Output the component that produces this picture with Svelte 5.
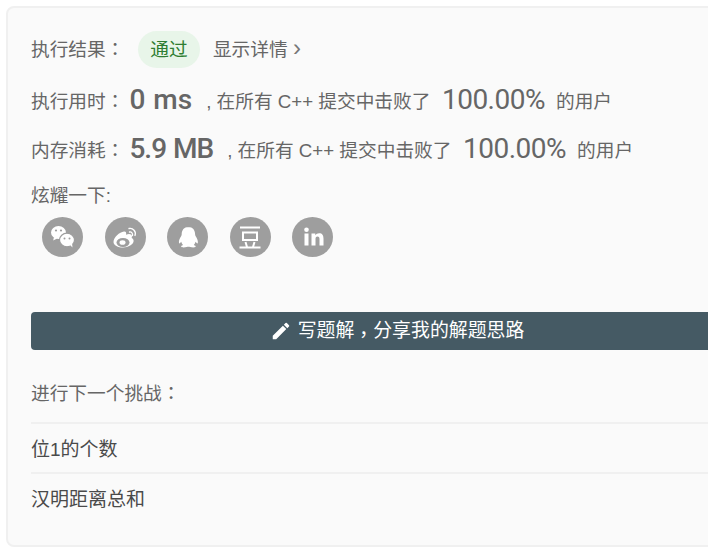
<script>
	const shares = ['wechat', 'weibo', 'qq', 'douban', 'linkedin'];
	const next = ['位1的个数', '汉明距离总和'];
</script>

<div class="page">
	<div class="card">
		<div class="row result">
			<span class="label">执行结果<span class="punct">：</span></span>
			<span class="badge">通过</span>
			<span class="details">显示详情 <span class="chev">›</span></span>
		</div>
		<div class="row stat">
			<span class="label">执行用时<span class="punct">：</span></span>
			<span class="num big">0 ms</span>
			<span class="text">, 在所有 C++ 提交中击败了</span>
			<span class="num pct">100.00%</span>
			<span class="text">的用户</span>
		</div>
		<div class="row stat second">
			<span class="label">内存消耗<span class="punct">：</span></span>
			<span class="num big">5.9 MB</span>
			<span class="text">, 在所有 C++ 提交中击败了</span>
			<span class="num pct">100.00%</span>
			<span class="text">的用户</span>
		</div>
		<div class="brag">炫耀一下:</div>
		<div class="shares">
			{#each shares as name}
				<span class="share" title={name}>
					{#if name === 'wechat'}
						<svg viewBox="0 0 40 40" width="40" height="40">
							<ellipse cx="15.500" cy="15.500" rx="7.500" ry="6.500" fill="#fff" />
							<path d="M11 20l-.8 3.500 4-2z" fill="#fff" />
							<ellipse cx="24" cy="23" rx="7.500" ry="6.800" stroke="#9e9e9e" stroke-width="1.200" fill="#fff" />
							<path d="M27 28l2.500 2.500-.4-4z" fill="#fff" />
							<circle cx="13" cy="13.500" r="1.100" fill="#9e9e9e" />
							<circle cx="18" cy="13.500" r="1.100" fill="#9e9e9e" />
							<circle cx="21.500" cy="21.500" r="1" fill="#9e9e9e" />
							<circle cx="26.500" cy="21.500" r="1" fill="#9e9e9e" />
						</svg>
					{:else if name === 'weibo'}
						<svg viewBox="0 0 40 40" width="40" height="40">
							<path d="M8.500 25c0-4.500 6-10 10.500-10.500 2.200-.2 2.500 1.700 2 3.300 3-1.200 6-.9 6 1.700 0 .7-.2 1.100-.4 1.500 1.500.5 2 1.700 2 3 0 3.500-5.500 6.500-10.500 6.500-5 0-9.600-2-9.600-5.500z" fill="#fff" />
							<ellipse cx="18" cy="25.500" rx="6.500" ry="4.500" fill="#9e9e9e" />
							<ellipse cx="17.500" cy="25.500" rx="3" ry="2.300" fill="#fff" />
							<path d="M24 11.500c4-.8 7.500 3 6 7M24.500 15c2-.4 3.500 1.500 3 3.500" fill="none" stroke="#fff" stroke-width="1.300" stroke-linecap="round" />
						</svg>
					{:else if name === 'qq'}
						<svg viewBox="0 0 40 40" width="40" height="40">
							<path d="M20.500 10c-4.500 0-6.800 3.200-6.800 7.300 0 .9-.2 1.400-.6 2-1.200 2.100-2.600 4.300-2.100 6.700.3 1 1.300 0 2.200-1.200.4 1.300.9 2.200 1.800 3.100-1.300.5-2.200 1-1.800 1.900.5.900 3.900.6 5.400.2 1.100-.3 2.500-.3 3.600 0 1.500.4 4.900.7 5.400-.2.400-.9-.5-1.400-1.800-1.900.9-.9 1.400-1.800 1.800-3.100.9 1.200 1.900 2.200 2.200 1.200.5-2.400-.9-4.600-2.100-6.700-.4-.6-.6-1.100-.6-2 0-4.100-2.300-7.300-6.800-7.300z" fill="#fff" />
						</svg>
					{:else if name === 'douban'}
						<svg viewBox="0 0 40 40" width="40" height="40">
							<path d="M10 10.500h20M13 15.500h14v7.500h-14zM15.500 25l1.500 5M24.500 25l-1.500 5M9.500 30.500h21" fill="none" stroke="#fff" stroke-width="2" />
						</svg>
					{:else}
						<svg viewBox="0 0 40 40" width="40" height="40">
							<rect x="11.500" y="16.500" width="4" height="12" fill="#fff" />
							<circle cx="13.500" cy="12.800" r="2.300" fill="#fff" />
							<path d="M18.500 16.500h3.800v1.700c.8-1.300 2.200-2 3.800-2 3.200 0 4.400 2 4.400 5.300v7h-4v-6.300c0-1.500-.5-2.600-2-2.600-1.500 0-2 1.100-2 2.700v6.200h-4z" fill="#fff" />
						</svg>
					{/if}
				</span>
			{/each}
		</div>
		<button class="solution">
			<svg viewBox="0 0 24 24" width="22" height="22"><path d="M3 17.250V21h3.750L17.810 9.940l-3.750-3.750L3 17.250zM20.710 7.040a1 1 0 0 0 0-1.410l-2.340-2.340a1 1 0 0 0-1.410 0l-1.830 1.830 3.750 3.750 1.830-1.830z" fill="#fff" /></svg>
			<span class="solution-text">写题解<span class="punct comma">，</span>分享我的解题思路</span>
		</button>
		<div class="challenge">进行下一个挑战<span class="punct">：</span></div>
		{#each next as title}
			<div class="next">{title}</div>
		{/each}
	</div>
</div>

<style>
	:global(body) {
		background: #fff;
		overflow: hidden;
	}

	.page {
		width: 708px;
		height: 551px;
		padding: 6px 0 0 6px;
		box-sizing: border-box;
		overflow: hidden;
		font-family: "Liberation Sans", "Noto Sans CJK SC", sans-serif;
		color: #666;
		font-size: 18.7px;
	}

	.card {
		width: 760px;
		height: 541px;
		box-sizing: border-box;
		background: #fafafa;
		border: 2px solid #f0f0f0;
		border-radius: 8px;
		padding: 22px 0 0 23px;
	}

	.punct {
		font-family: "Noto Sans CJK TC", sans-serif;
	}

	.comma {
		line-height: 1;
		vertical-align: -0.25em;
	}

	.row {
		display: flex;
		align-items: center;
		width: 690px;
	}

	.result {
		height: 38px;
	}

	.result .label {
		padding-bottom: 3px;
	}

	.badge {
		margin-left: 13.500px;
		width: 62px;
		height: 37px;
		line-height: 37px;
		text-align: center;
		border-radius: 19px;
		background: #e8f5e9;
		color: #2e7d32;
	}

	.details {
		margin-left: 13px;
		padding-bottom: 3px;
	}

	.chev {
		font-size: 24px;
		line-height: 18px;
		font-weight: 300;
		color: #777;
	}

	.stat {
		height: 50px;
		margin-top: 6px;
	}

	.stat.second {
		margin-top: -1px;
	}

	.num {
		font-family: Roboto, sans-serif;
		font-weight: 500;
		font-size: 28px;
		word-spacing: 1px;
	}

	.big {
		margin: 0 14px 0 5px;
	}

	.second .big {
		letter-spacing: -1px;
	}

	.pct {
		font-weight: 400;
		letter-spacing: -0.5px;
		margin: 0 11px 0 11.500px;
	}

	.brag {
		margin-top: 8px;
		line-height: 30px;
	}

	.shares {
		display: flex;
		gap: 21.5px;
		margin: 6px 0 0 11px;
	}

	.share {
		width: 41px;
		height: 40px;
		border-radius: 50%;
		background: #9e9e9e;
		display: flex;
		align-items: center;
		justify-content: center;
	}

	.solution {
		display: flex;
		align-items: center;
		justify-content: center;
		gap: 6px;
		width: 732px;
		height: 38px;
		margin: 55px 0 0 0;
		padding: 0;
		box-sizing: border-box;
		border: none;
		border-radius: 4px;
		background: #455a64;
		color: #fff;
		font: inherit;
		font-size: 18.9px;
	}

	.solution-text {
		padding-bottom: 4px;
	}

	.challenge {
		margin-top: 27px;
		line-height: 30px;
		height: 45px;
	}

	.next {
		width: 700px;
		height: 48px;
		line-height: 52px;
		border-top: 2px solid #f0f0f0;
		color: #4a4a4a;
		font-size: 19px;
	}
</style>
